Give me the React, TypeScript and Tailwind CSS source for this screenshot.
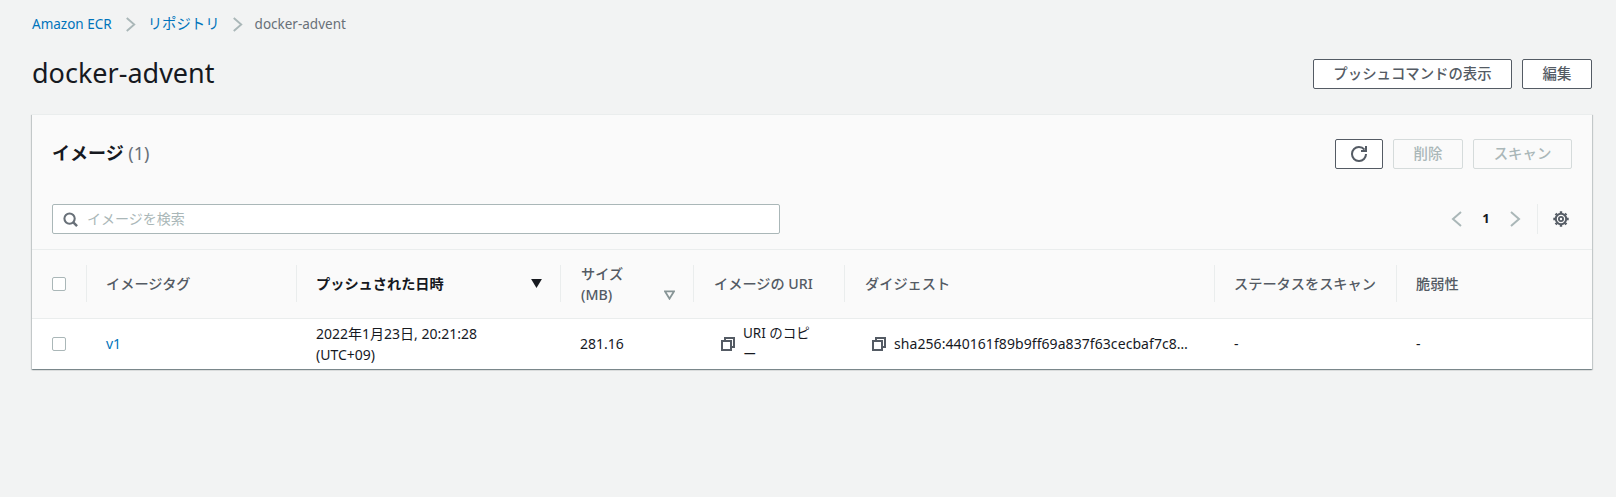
import React from "react";

const font = { fontFamily: '"Noto Sans", "Noto Sans CJK JP", sans-serif' };

function Chevron({ dir = "right", className = "" }: { dir?: "left" | "right"; className?: string }) {
  return (
    <svg viewBox="0 0 16 16" fill="none" stroke="currentColor" strokeWidth="2" className={className}>
      <polyline points={dir === "right" ? "4,1 12,8 4,15" : "12,1 4,8 12,15"} />
    </svg>
  );
}

function CopyIcon() {
  return (
    <svg viewBox="0 0 16 16" fill="none" stroke="#545b64" strokeWidth="2" className="w-[16px] h-[16px] shrink-0">
      <path d="M2 5h9v9H2z" />
      <path d="M5 5V2h9v9h-3" />
    </svg>
  );
}

function Gear() {
  return (
    <svg viewBox="0 0 16 16" fill="none" stroke="#545b64" className="w-[16px] h-[16px]">
      <circle cx="8" cy="8" r="5.2" strokeWidth="2" />
      <circle cx="8" cy="8" r="2.1" strokeWidth="1.8" />
      <path
        strokeWidth="2.4"
        d="M8 2V.3M8 14v1.7M2 8H.3M14 8h1.7M12.24 3.76l1.2-1.2M3.76 3.76l-1.2-1.2M12.24 12.24l1.2 1.2M3.76 12.24l-1.2 1.2"
      />
    </svg>
  );
}

function Checkbox() {
  return <span className="block w-[14px] h-[14px] bg-white border border-[#aab7b8] rounded-[2px]" />;
}

function Btn({ children, w, disabled }: { children: React.ReactNode; w: string; disabled?: boolean }) {
  return (
    <button
      className={
        disabled
          ? `${w} h-[30px] flex items-center justify-center rounded-[2px] border border-[#d5dbdb] text-[#aab7b8] text-[14.4px] font-medium`
          : `${w} h-[30px] flex items-center justify-center rounded-[2px] border border-[#545b64] bg-white text-[#545b64] text-[14.4px] font-medium`
      }
    >
      {children}
    </button>
  );
}

function Th({ children, w, first, sort }: { children: React.ReactNode; w: string; first?: boolean; sort?: "solid" | "hollow" }) {
  return (
    <th className={`${w} p-0 font-normal text-left`}>
      <div className={`h-[37px] flex items-center pl-[19px] pr-[18px] justify-between text-[14.2px] font-medium text-[#545b64] ${first ? "" : "border-l border-[#eaeded]"}`}>
        {children}
        {sort === "solid" && (
          <svg viewBox="0 0 12 10" className="w-[11px] h-[9px] shrink-0"><polygon points="0,0 12,0 6,10" fill="#16191f" /></svg>
        )}
        {sort === "hollow" && (
          <svg viewBox="0 0 12 10" className="w-[11px] h-[10px] shrink-0 self-end mb-[2px]"><polygon points="1,1 11,1 6,9" fill="none" stroke="#879596" strokeWidth="2" /></svg>
        )}
      </div>
    </th>
  );
}

export default function App() {
  return (
    <div style={font} className="w-[1616px] h-[497px] bg-[#f2f3f3] text-[#16191f] pl-[32px] pr-[24px] overflow-hidden">
      <nav className="flex items-center h-[14px] mt-[17px] text-[13.5px] leading-[14px]">
        <span className="text-[#0073bb]">Amazon ECR</span>
        <Chevron className="w-[15px] h-[15px] ml-[11px] mr-[10px] text-[#aab7b8]" />
        <span className="text-[#0073bb] text-[14.4px]">リポジトリ</span>
        <Chevron className="w-[15px] h-[15px] ml-[10px] mr-[10px] text-[#aab7b8]" />
        <span className="text-[#687078]">docker-advent</span>
      </nav>

      <header className="flex items-center justify-between mt-[28px] h-[30px]">
        <h1 className="text-[27px] leading-[30px] font-normal -mt-[2px]">docker-advent</h1>
        <div className="flex gap-[10px]">
          <Btn w="w-[199px]">プッシュコマンドの表示</Btn>
          <Btn w="w-[70px]">編集</Btn>
        </div>
      </header>

      <section className="mt-[25px] bg-white border-t border-[#eaeded] shadow-[0_1px_1px_0_rgba(0,28,36,0.3),1px_1px_1px_0_rgba(0,28,36,0.15),-1px_1px_1px_0_rgba(0,28,36,0.15)]">
        <div className="bg-[#fafafa] h-[135px] pl-[20px] pr-[20px] pt-[24px] border-b border-[#eaeded]">
          <div className="flex items-center justify-between h-[30px]">
            <h2 className="text-[18px] leading-[30px] font-bold -mt-[2px]">
              イメージ <span className="font-normal text-[#687078]">(1)</span>
            </h2>
            <div className="flex gap-[10px]">
              <Btn w="w-[48px]">
                <svg viewBox="0 0 16 16" fill="none" stroke="#545b64" strokeWidth="2" className="w-[16px] h-[16px]">
                  <path d="M10 5h5V0" />
                  <path d="M15 8a6.91 6.91 0 0 1-7 7 6.91 6.91 0 0 1-7-7 6.91 6.91 0 0 1 7-7 7.32 7.32 0 0 1 5.5 2.62" />
                </svg>
              </Btn>
              <Btn w="w-[70px]" disabled>削除</Btn>
              <Btn w="w-[99px]" disabled>スキャン</Btn>
            </div>
          </div>
          <div className="flex items-center justify-between mt-[35px]">
            <div className="w-[728px] h-[30px] bg-white border border-[#aab7b8] rounded-[2px] flex items-center pl-[10px]">
              <svg viewBox="0 0 16 16" fill="none" stroke="#687078" strokeWidth="2.2" className="w-[15px] h-[15px]">
                <circle cx="7" cy="7" r="5.5" />
                <line x1="11" y1="11" x2="15" y2="15" strokeWidth="2.6" />
              </svg>
              <span className="ml-[9px] text-sm text-[#aab7b8]">イメージを検索</span>
            </div>
            <div className="flex items-center">
              <Chevron dir="left" className="w-[16px] h-[16px] text-[#aab7b8]" />
              <span className="w-[42px] text-center text-[13px] font-bold">1</span>
              <Chevron className="w-[16px] h-[16px] text-[#aab7b8]" />
              <span className="ml-[14px] mr-[15px] h-[30px] border-l border-[#eaeded]" />
              <span className="mr-[3px]"><Gear /></span>
            </div>
          </div>
        </div>

        <table className="w-full table-fixed border-collapse">
          <thead>
            <tr className="bg-[#fafafa] h-[68px] border-b border-[#eaeded]">
              <Th w="w-[54px]" first><span className="ml-[1px]"><Checkbox /></span></Th>
              <Th w="w-[210px]">イメージタグ</Th>
              <Th w="w-[264px]" sort="solid"><span className="font-bold text-[#16191f]">プッシュされた日時</span></Th>
              <Th w="w-[133px]" sort="hollow"><span className="w-[50px] ml-[1px] leading-[21px]">サイズ (MB)</span></Th>
              <Th w="w-[151px]"><span className="ml-[1px]">イメージの URI</span></Th>
              <Th w="w-[370px]"><span className="ml-[1px]">ダイジェスト</span></Th>
              <Th w="w-[182px]">ステータスをスキャン</Th>
              <Th w="w-[196px]">脆弱性</Th>
            </tr>
          </thead>
          <tbody className="text-[14px] leading-[21px]">
            <tr className="h-[51px] bg-white">
              <td className="pl-[20px]"><Checkbox /></td>
              <td className="pl-[20px] text-[#0073bb]">v1</td>
              <td className="pl-[20px]">2022年1月23日, 20:21:28<br />(UTC+09)</td>
              <td className="pl-[20px]">281.16</td>
              <td className="pl-[27px]">
                <div className="flex items-center gap-[7px]">
                  <CopyIcon />
                  <span className="w-[72px] break-all text-[13.5px]">URI のコピー</span>
                </div>
              </td>
              <td className="pl-[27px]">
                <div className="flex items-center gap-[7px]">
                  <CopyIcon />
                  <span className="whitespace-nowrap tracking-[0.07px]">sha256:440161f89b9ff69a837f63cecbaf7c8…</span>
                </div>
              </td>
              <td className="pl-[20px]">-</td>
              <td className="pl-[20px]">-</td>
            </tr>
          </tbody>
        </table>
      </section>
    </div>
  );
}
